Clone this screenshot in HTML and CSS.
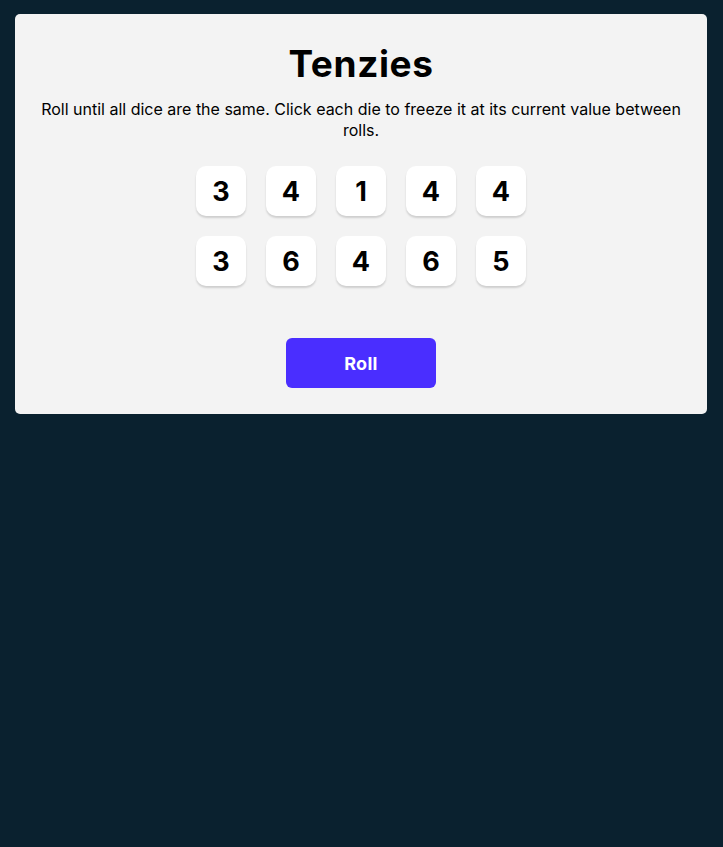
FILE: index.html
```html
<!DOCTYPE html>
<html>
<head>
<meta charset="utf-8">
<link rel="stylesheet" href="styles.css">
</head>
<body>
<main class="card">
  <h1 class="title">Tenzies</h1>
  <p class="instructions">Roll until all dice are the same. Click each die to freeze it at its current value between rolls.</p>
  <div class="dice">
    <button class="die">3</button>
    <button class="die">4</button>
    <button class="die">1</button>
    <button class="die">4</button>
    <button class="die">4</button>
    <button class="die">3</button>
    <button class="die">6</button>
    <button class="die">4</button>
    <button class="die">6</button>
    <button class="die">5</button>
  </div>
  <button class="roll">Roll</button>
</main>
</body>
</html>
```
FILE: styles.css
```css
html, body {
  margin: 0;
  height: 100%;
}
body {
  background: #0A212F;
  padding: 14px 16px 0 15px;
  box-sizing: border-box;
  font-family: Inter, "Noto Sans", sans-serif;
}
.card {
  background: #F3F3F3;
  border-radius: 5px;
  height: 400px;
  box-sizing: border-box;
  padding: 26px 20px 26px;
  display: flex;
  flex-direction: column;
  align-items: center;
}
.title {
  margin: 0;
  font-size: 37px;
  line-height: 48px;
  font-weight: 700;
  letter-spacing: 0.6px;
  color: #000;
}
.instructions {
  margin: 11px 0 0;
  font-size: 16px;
  line-height: 21px;
  text-align: center;
  color: #000;
}
.dice {
  margin-top: 25px;
  display: grid;
  grid-template-columns: repeat(5, 50px);
  grid-auto-rows: 50px;
  gap: 20px;
}
.die {
  border: none;
  background: #fff;
  border-radius: 10px;
  box-shadow: 0 2px 2px rgba(0, 0, 0, 0.15);
  font-family: Inter, sans-serif;
  font-size: 27px;
  font-weight: 700;
  color: #000;
  padding: 0;
}
.roll {
  margin-top: 52px;
  width: 150px;
  height: 50px;
  border: none;
  border-radius: 6px;
  background: #4A2EFF;
  color: #fff;
  font-family: Inter, sans-serif;
  font-size: 18px;
  font-weight: 700;
  letter-spacing: 0.3px;
}
```
